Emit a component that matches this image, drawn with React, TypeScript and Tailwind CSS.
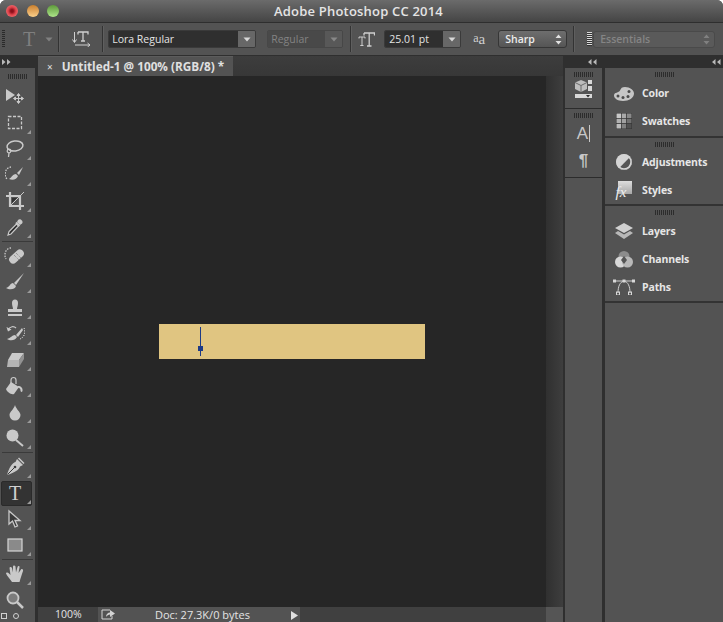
import React from "react";

const F = "[font-family:'Open_Sans','Liberation_Sans',sans-serif]";

function Caret({ c = "#d8d8d8" }: { c?: string }) {
  return (
    <svg width="8" height="5" viewBox="0 0 8 5"><path d="M0.5 0.5H7.5L4 4.5Z" fill={c} /></svg>
  );
}

function Updown({ c = "#e0e0e0" }: { c?: string }) {
  return (
    <svg width="7" height="11" viewBox="0 0 7 11"><path d="M3.5 0.5L6.5 4H0.5ZM3.5 10.5L0.5 7H6.5Z" fill={c} /></svg>
  );
}

function Sep() {
  return <div className="w-px h-[26px] bg-[#333333] border-r border-[#5f5f5f] box-content" />;
}

function Grip2() {
  return (
    <div className="flex justify-center gap-px h-[5px]">
      {Array.from({ length: 10 }).map((_, i) => (
        <div key={i} className="w-px h-[5px] bg-[#2c2c2c]" />
      ))}
    </div>
  );
}

function Corner() {
  return (
    <svg className="absolute right-[4px] bottom-[2px]" width="4" height="4" viewBox="0 0 4 4"><path d="M4 0V4H0Z" fill="#9a9a9a" /></svg>
  );
}

const tc = "#c9c9c9";

const icons: Record<string, React.ReactNode> = {
  move: (
    <svg width="20" height="18" viewBox="0 0 20 18">
      <path d="M1 1L10 7L1 13Z" fill={tc} />
      <path d="M13.500 6V15M9 10.500H18M13.500 5.500L12 7.500H15ZM13.500 15.500L12 13.500H15ZM8.500 10.500L10.500 9V12ZM18.500 10.500L16.500 9V12Z" stroke={tc} strokeWidth="1" fill={tc} />
    </svg>
  ),
  marquee: (
    <svg width="18" height="18" viewBox="0 0 18 18">
      <rect x="2.500" y="2.500" width="13" height="12" fill="none" stroke={tc} strokeWidth="1.300" strokeDasharray="3 1.500" />
    </svg>
  ),
  lasso: (
    <svg width="20" height="20" viewBox="0 0 20 20">
      <ellipse cx="10" cy="7" rx="8" ry="5" transform="rotate(-8 10 7)" fill="none" stroke={tc} strokeWidth="1.500" />
      <circle cx="4" cy="12" r="1.800" fill="none" stroke={tc} strokeWidth="1.200" />
      <path d="M4 14L3.500 18" stroke={tc} strokeWidth="1.200" />
    </svg>
  ),
  quick: (
    <svg width="20" height="20" viewBox="0 0 20 20">
      <path d="M6 2A6 7 0 0 0 2 14" fill="none" stroke={tc} strokeWidth="1.300" strokeDasharray="1.500 1.200" />
      <path d="M18 2L12 8L14 10Z" fill={tc} />
      <path d="M11 9C8 9 7 12 4 14C8 16 12 14 13 11Z" fill={tc} />
    </svg>
  ),
  crop: (
    <svg width="20" height="20" viewBox="0 0 20 20">
      <path d="M5 1V15H19M1 5H15V19" fill="none" stroke={tc} strokeWidth="2.200" />
      <path d="M5 15L15 5M15 5L19 1" stroke={tc} strokeWidth="1" />
      <path d="M7 7H12L7 12Z" fill="#333333" />
    </svg>
  ),
  dropper: (
    <svg width="20" height="20" viewBox="0 0 20 20">
      <path d="M13 3C15 0.500 19 4 17 6.500L15 8L12 5Z" fill={tc} />
      <path d="M11 5.500L14.500 9" stroke={tc} strokeWidth="2" />
      <path d="M11.500 7L4 14.500L3 18L6 17L13.500 9Z" fill="#2e2e2e" stroke={tc} strokeWidth="1.200" />
    </svg>
  ),
  heal: (
    <svg width="22" height="20" viewBox="0 0 22 20">
      <path d="M7 2A6 7 0 0 0 2 13" fill="none" stroke={tc} strokeWidth="1.300" strokeDasharray="1.500 1.200" />
      <rect x="4" y="6.500" width="17" height="8" rx="4" transform="rotate(-42 12.500 10.500)" fill={tc} />
      <path d="M10 9L15 14M12 7L17 12" stroke="#808080" strokeWidth="1" strokeDasharray="1 1" />
    </svg>
  ),
  brush: (
    <svg width="20" height="20" viewBox="0 0 20 20">
      <path d="M19 1L9 11L11 13Z" fill={tc} />
      <path d="M8 11C5 11 5 15 1 16C4 18 10 18 11 14Z" fill={tc} />
    </svg>
  ),
  stamp: (
    <svg width="20" height="20" viewBox="0 0 20 20">
      <path d="M7 5A3 3.500 0 1 1 13 5C13 8 12 9 12 11H17V14H3V11H8C8 9 7 8 7 5Z" fill={tc} />
      <rect x="3" y="16" width="14" height="2" fill={tc} />
    </svg>
  ),
  history: (
    <svg width="20" height="20" viewBox="0 0 20 20">
      <path d="M3 6C5 2 9 2 11 4" fill="none" stroke={tc} strokeWidth="1.200" />
      <path d="M1.500 3L3 7.500L6.500 5.500Z" fill={tc} />
      <path d="M17 4L11 11L13 13L18 6Z" fill={tc} />
      <path d="M10 11C7 11 6 14 2 15C5 17 10 17 12 13Z" fill={tc} />
      <path d="M19 4A8 8 0 0 1 15 15" fill="none" stroke="#ffffff" strokeWidth="1" strokeDasharray="1.200 1.200" />
    </svg>
  ),
  eraser: (
    <svg width="20" height="20" viewBox="0 0 20 20">
      <path d="M7 3H19L14 10H3Z" fill={tc} />
      <path d="M3 10H14V17H2Z" fill="#b4b4b4" />
      <path d="M14 10L19 3V9L14 17Z" fill="#929292" />
    </svg>
  ),
  bucket: (
    <svg width="20" height="20" viewBox="0 0 20 20">
      <path d="M6 8V4A2.500 2.500 0 0 1 11 4V8" fill="none" stroke={tc} strokeWidth="1.200" />
      <path d="M6 6L14 11L9 18C6 19 2 16 1 13Z" fill={tc} />
      <path d="M13 10C16 10 18 12 17.500 15C17 16.500 15.500 16 15.500 14.500C15.500 13 15 12 13 11.500Z" fill={tc} />
    </svg>
  ),
  drop: (
    <svg width="18" height="18" viewBox="0 0 18 18">
      <path d="M9 2C10 6 14.500 9 14.500 12A5.500 5.500 0 0 1 3.500 12C3.500 9 8 6 9 2Z" fill={tc} />
    </svg>
  ),
  dodge: (
    <svg width="20" height="20" viewBox="0 0 20 20">
      <circle cx="7.500" cy="7.500" r="6" fill={tc} />
      <path d="M11 12L18 18" stroke={tc} strokeWidth="2" />
    </svg>
  ),
  pen: (
    <svg width="20" height="20" viewBox="0 0 20 20">
      <path d="M12 2L18 8L15 9.500C14 13 9 16 2 18C4 11 7 6 10.500 5Z" fill={tc} />
      <path d="M13.500 1L19 6.500" stroke={tc} strokeWidth="1.500" />
      <path d="M2.500 17.500L9 11" stroke="#3a3a3a" strokeWidth="1" />
      <circle cx="10" cy="10" r="1.300" fill="#3a3a3a" />
    </svg>
  ),
  path: (
    <svg width="16" height="20" viewBox="0 0 16 20">
      <path d="M2 2V15L5.500 12L8 18L10.500 17L8 11.500H13Z" fill="#3a3a3a" stroke={tc} strokeWidth="1.300" />
    </svg>
  ),
  rect: (
    <svg width="16" height="14" viewBox="0 0 16 14">
      <rect x="1" y="1" width="14" height="12" fill="#8a8a8a" stroke="#d6d6d6" strokeWidth="1.200" />
    </svg>
  ),
  hand: (
    <svg width="20" height="20" viewBox="0 0 20 20">
      <path d="M7 18C5 15 2 12 1 9.500C1 8 3 8 4 9.500L5.500 11L4.500 4C4.500 2.500 6.500 2.500 7 4L8 8.500V2.500C8 1 10 1 10.500 2.500L11 8.500L12.500 3C13 1.500 15 2 14.500 3.500L13.500 9L16 5.500C17 4.500 18.500 5.500 18 7C17 10 16 13 14.500 18Z" fill={tc} />
    </svg>
  ),
  zoom: (
    <svg width="20" height="20" viewBox="0 0 20 20">
      <circle cx="8" cy="8" r="5.500" fill="#7c7c7c" stroke={tc} strokeWidth="1.800" />
      <path d="M12 12L18 18" stroke={tc} strokeWidth="2.500" />
    </svg>
  ),
};

function Tool({ name, corner = true }: { name: string; corner?: boolean }) {
  return (
    <div className="relative h-[26px] shrink-0 flex items-center justify-center pr-[5px]">
      {icons[name]}
      {corner && <Corner />}
    </div>
  );
}

function ToolSep() {
  return <div className="h-px shrink-0 mx-[2px] my-[1px] bg-[#3a3a3a]" />;
}

function PanelRow({ icon, label }: { icon: React.ReactNode; label: string }) {
  return (
    <div className="h-[28px] flex items-center">
      <div className="w-[37px] flex justify-center">{icon}</div>
      <span className={`text-[10.500px] tracking-[-0.15px] leading-none font-bold text-[#e6e6e6] ${F}`}>{label}</span>
    </div>
  );
}

const pc = "#c6c6c6";

export default function App() {
  return (
    <div className={`w-[723px] h-[622px] flex flex-col overflow-hidden bg-[#535353] rounded-t-[6px] ${F}`}>
      {/* title bar */}
      <div className="h-[23px] shrink-0 flex items-center pl-[6px] relative bg-gradient-to-b from-[#6b6b6b] to-[#454545] border-b border-[#2e2e2e]">
        <div className="flex gap-[8.500px]">
          <div className="w-[12px] h-[12px] rounded-full bg-[radial-gradient(circle_at_50%_50%,#8c0f1a_15%,#e0434b_45%,#f08a8a_100%)]" />
          <div className="w-[12px] h-[12px] rounded-full bg-gradient-to-b from-[#c97f2a] to-[#fbd08a]" />
          <div className="w-[12px] h-[12px] rounded-full bg-gradient-to-b from-[#5e9a3a] to-[#aee68a]" />
        </div>
        <div className="flex-1 text-center pr-[65px] text-[13px] font-semibold leading-none text-[#e4e4e4] tracking-[0.2px]">
          Adobe Photoshop CC 2014
        </div>
      </div>

      {/* options bar */}
      <div className="h-[33px] shrink-0 flex items-center bg-[#535353] border-b border-[#2f2f2f] relative">
        <div className="ml-[2px] w-[3px] h-[18px] bg-[repeating-linear-gradient(to_bottom,#2a2a2a_0,#2a2a2a_1px,transparent_1px,transparent_2px)]" />
        <span className="ml-[18px] text-[20px] leading-none text-[#7f7f7f] [font-family:'Liberation_Serif',serif]">T</span>
        <div className="ml-[10px]"><Caret c="#808080" /></div>
        <div className="ml-[5px]"><Sep /></div>
        <svg className="ml-[12px]" width="20" height="16" viewBox="0 0 20 16">
          <path d="M2.500 1V11M0.500 8.500L2.500 11.500L4.500 8.500" fill="none" stroke="#cfcfcf" />
          <path d="M6 1H16V3.500M6 3.500V1M11 1V10M9 10H13" fill="none" stroke="#cfcfcf" strokeWidth="1.300" />
          <path d="M3 14H18M15.500 12L18 14L15.500 16" fill="none" stroke="#cfcfcf" />
        </svg>
        <div className="ml-[10px]"><Sep /></div>

        <div className="ml-[4px] w-[148px] h-[18px] flex border border-[#3a3a3a] rounded-[2px] overflow-hidden">
          <div className="flex-1 bg-[#2f2f2f] pl-[3px] text-[10.500px] leading-[16px] text-[#e4e4e4]">Lora Regular</div>
          <div className="w-[17px] bg-[#676767] flex items-center justify-center"><Caret /></div>
        </div>

        <div className="ml-[11px] w-[76px] h-[18px] flex border border-[#474747] rounded-[2px] overflow-hidden">
          <div className="flex-1 bg-[#494949] pl-[3px] text-[10.500px] leading-[16px] text-[#838383]">Regular</div>
          <div className="w-[17px] bg-[#585858] flex items-center justify-center"><Caret c="#888888" /></div>
        </div>

        <div className="ml-[7px]"><Sep /></div>

        <svg className="ml-[6px]" width="17" height="15" viewBox="0 0 17 15">
          <path d="M1 5H7V6.500M1 6.500V5M4 5V13.500H2.500H5.500" fill="none" stroke="#cfcfcf" />
          <path d="M6 1H16.500V3.500M6 3.500V1M11.200 1V14M9 14H13.500" fill="none" stroke="#cfcfcf" strokeWidth="1.300" />
        </svg>

        <div className="ml-[9px] w-[77px] h-[18px] flex border border-[#3a3a3a] rounded-[2px] overflow-hidden">
          <div className="flex-1 bg-[#2f2f2f] pl-[4px] text-[10.500px] leading-[16px] text-[#e4e4e4]">25.01 pt</div>
          <div className="w-[17px] bg-[#676767] flex items-center justify-center"><Caret /></div>
        </div>

        <div className="ml-[12px] w-[16px] flex items-end text-[#cfcfcf] leading-none [font-family:'Liberation_Serif',serif]">
          <span className="text-[12px] mb-[3px]">a</span>
          <span className="text-[15px]">a</span>
        </div>

        <div className="ml-[9px] w-[69px] h-[18px] flex items-center justify-between pl-[6px] pr-[4px] rounded-[3px] border border-[#363636] bg-gradient-to-b from-[#6e6e6e] to-[#555555]">
          <span className="text-[10.500px] font-semibold leading-none text-[#ececec]">Sharp</span>
          <Updown />
        </div>

        <div className="ml-[6px]"><Sep /></div>

        <div className="ml-[12px] w-[5px] h-[14px] bg-[repeating-linear-gradient(to_bottom,#d8d8d8_0,#d8d8d8_1px,#333333_1px,#333333_2px)]" />

        <div className="ml-[1px] w-[122px] h-[17px] flex items-center justify-between pl-[6px] pr-[4px] rounded-[3px] border border-[#4a4a4a] bg-[#5a5a5a]">
          <span className="text-[10.500px] font-semibold leading-none text-[#858585]">Essentials</span>
          <Updown c="#808080" />
        </div>
      </div>

      {/* main */}
      <div className="flex-1 flex min-h-0">
        {/* left tools */}
        <div className="w-[38px] shrink-0 flex flex-col border-r-[3px] border-[#2f2f2f] overflow-hidden">
          <div className="h-[12px] shrink-0 bg-[#2f2f2f] flex items-center pl-[2px]">
            <svg width="9" height="6" viewBox="0 0 9 6"><path d="M0 0L3.500 3L0 6ZM5 0L8.500 3L5 6Z" fill="#b8b8b8" /></svg>
          </div>
          <div className="h-[16px] shrink-0 flex items-center"><div className="w-full"><Grip2 /></div></div>
          <Tool name="move" corner={false} />
          <Tool name="marquee" />
          <Tool name="lasso" />
          <Tool name="quick" />
          <Tool name="crop" />
          <Tool name="dropper" />
          <ToolSep />
          <Tool name="heal" />
          <Tool name="brush" />
          <Tool name="stamp" />
          <Tool name="history" />
          <Tool name="eraser" />
          <Tool name="bucket" />
          <Tool name="drop" />
          <Tool name="dodge" />
          <ToolSep />
          <Tool name="pen" />
          <div className="relative h-[26px] shrink-0 flex items-center justify-center pr-[5px]">
            <div className="absolute left-[1px] right-[3px] top-[1px] bottom-0 bg-[#333333] rounded-[2px] border border-[#2a2a2a]" />
            <span className="relative text-[20px] leading-none text-[#cfcfcf] [font-family:'Liberation_Serif',serif]">T</span>
            <Corner />
          </div>
          <Tool name="path" />
          <Tool name="rect" />
          <ToolSep />
          <Tool name="hand" />
          <Tool name="zoom" corner={false} />
          <div className="flex gap-[6px] pl-[1px]">
            <div className="w-[6px] h-[6px] border border-[#d0d0d0]" />
            <div className="w-[6px] h-[6px] border border-[#d0d0d0] rounded-full" />
          </div>
        </div>

        {/* document area */}
        <div className="flex-1 flex flex-col min-w-0">
          <div className="h-[20px] shrink-0 flex bg-gradient-to-b from-[#3d3d3d] to-[#373737]">
            <div className="w-[195px] flex items-center bg-[#535353] border-t border-[#5c5c5c]">
              <span className="ml-[9px] text-[10px] leading-none text-[#e0e0e0]">×</span>
              <span className="ml-[9px] text-[11.750px] leading-none font-bold text-[#e0e0e0] whitespace-nowrap">Untitled-1 @ 100% (RGB/8) *</span>
            </div>
          </div>
          <div className="flex-1 flex min-h-0">
            <div className="flex-1 bg-[#262626] flex flex-col items-center justify-center">
              <div className="mb-[1px] w-[266px] h-[35px] bg-[#e0c581] pl-[41px] pt-[3px]">
                <div className="relative w-[1px] h-[29px] bg-[#1d3a86]">
                  <div className="absolute left-[-2px] top-[19px] w-[5px] h-[5px] bg-[#1d3a86]" />
                </div>
              </div>
            </div>
            <div className="w-[17px] shrink-0 bg-gradient-to-r from-[#303030] to-[#3e3e3e]" />
          </div>
          <div className="h-[15px] shrink-0 flex text-[10.500px] leading-[15px] text-[#e4e4e4]">
            <div className="w-[60px] bg-[#404040] pl-[17px]">100%</div>
            <div className="w-[202px] bg-[#535353] relative flex">
              <svg className="ml-[3px] mt-[2px]" width="14" height="11" viewBox="0 0 14 11">
                <path d="M9 1H1V10H11V7" fill="none" stroke="#d4d4d4" />
                <path d="M5 8C5 5 7 3.500 9 3.500V1L14 4.500L9 8V5.500C7.500 5.500 6 6.500 5 8Z" fill="#d4d4d4" />
              </svg>
              <span className="ml-[40px] text-[11px]">Doc: 27.3K/0 bytes</span>
              <svg className="absolute left-[193px] top-[4px]" width="7" height="9" viewBox="0 0 7 9"><path d="M0 0L7 4.500L0 9Z" fill="#e0e0e0" /></svg>
            </div>
            <div className="flex-1 bg-[#404040]" />
            <div className="w-[17px] bg-[#555555]" />
          </div>
        </div>

        {/* right docks */}
        <div className="w-[160px] shrink-0 flex flex-col border-l-[2px] border-[#2f2f2f]">
          <div className="h-[12px] shrink-0 bg-[#2f2f2f] flex items-center">
            <div className="w-[32px] flex justify-end">
              <svg width="9" height="6" viewBox="0 0 9 6"><path d="M3.500 0L0 3L3.500 6ZM8.500 0L5 3L8.500 6Z" fill="#b8b8b8" /></svg>
            </div>
            <div className="flex-1 flex justify-end pr-[2px]">
              <svg width="9" height="6" viewBox="0 0 9 6"><path d="M3.500 0L0 3L3.500 6ZM8.500 0L5 3L8.500 6Z" fill="#b8b8b8" /></svg>
            </div>
          </div>
          <div className="flex-1 flex min-h-0">
            {/* icon dock */}
            <div className="w-[37px] shrink-0 flex flex-col border-r-[3px] border-[#2f2f2f] box-content">
              <div className="h-[41px] shrink-0 border-b border-[#2c2c2c] pt-[4px] flex flex-col items-center gap-[3px]">
                <Grip2 />
                <svg width="17" height="19" viewBox="0 0 17 19">
                  <path d="M6 0L12 2.500V9L6 12L0 9V2.500Z" fill="#bdbdbd" />
                  <path d="M6 5.500V12M0 2.500L6 5.500L12 2.500" fill="none" stroke="#6a6a6a" />
                  <rect x="13" y="0" width="4" height="4" fill="#d8d8d8" />
                  <rect x="13" y="6" width="4" height="5" fill="#d8d8d8" />
                  <rect x="0" y="14" width="17" height="4" fill="#d8d8d8" />
                  <path d="M11 15H15L13 17.500Z" fill="#2a2a2a" />
                </svg>
              </div>
              <div className="h-[69px] shrink-0 border-b border-[#2c2c2c] pt-[4px] flex flex-col items-center">
                <Grip2 />
                <div className="mt-[5px] h-[20px] flex items-center leading-none text-[17px] text-[#c8c8c8] [font-family:'Liberation_Sans',sans-serif]">
                  <span>A</span><span className="w-px h-[17px] bg-[#c8c8c8] ml-[1px]" />
                </div>
                <div className="mt-[9px] text-[17px] font-bold leading-none text-[#c8c8c8] [font-family:'Liberation_Sans',sans-serif]">¶</div>
              </div>
            </div>
            {/* panel dock */}
            <div className="flex-1 flex flex-col min-w-0">
              <div className="h-[70px] shrink-0 border-b-[2px] border-[#333333] pt-[4px]">
                <Grip2 />
                <div className="mt-[2px]">
                  <PanelRow
                    label="Color"
                    icon={
                      <svg width="20" height="15" viewBox="0 0 20 15">
                        <path d="M11 1C16 1 20 4 20 7.500C20 12 15 15 9 15C3 15 0 12 0 9.500C0 6 5 7 6 4.500C7 2 8 1 11 1Z" fill={pc} />
                        <circle cx="4" cy="10" r="1.500" fill="#4a4a4a" />
                        <circle cx="9" cy="11.500" r="1.500" fill="#4a4a4a" />
                        <circle cx="14" cy="10.500" r="1.500" fill="#4a4a4a" />
                        <circle cx="15" cy="5.500" r="1.500" fill="#4a4a4a" />
                      </svg>
                    }
                  />
                  <PanelRow
                    label="Swatches"
                    icon={
                      <svg width="16" height="16" viewBox="0 0 16 16">
                        <rect width="16" height="16" fill="#333333" />
                        <rect x="0.500" y="0.500" width="4.500" height="4.500" fill="#c8c8c8" />
                        <rect x="5.700" y="0.500" width="4.500" height="4.500" fill="#a8a8a8" />
                        <rect x="11" y="0.500" width="4.500" height="4.500" fill="#8a8a8a" />
                        <rect x="0.500" y="5.700" width="4.500" height="4.500" fill="#b0b0b0" />
                        <rect x="5.700" y="5.700" width="4.500" height="4.500" fill="#a0a0a0" />
                        <rect x="11" y="5.700" width="4.500" height="4.500" fill="#707070" />
                        <rect x="0.500" y="11" width="4.500" height="4.500" fill="#bcbcbc" />
                        <rect x="5.700" y="11" width="4.500" height="4.500" fill="#808080" />
                        <rect x="11" y="11" width="4.500" height="4.500" fill="#505050" />
                      </svg>
                    }
                  />
                </div>
              </div>
              <div className="h-[68px] shrink-0 border-b-[2px] border-[#333333] pt-[4px]">
                <Grip2 />
                <div className="mt-[1px]">
                  <PanelRow
                    label="Adjustments"
                    icon={
                      <svg width="16" height="16" viewBox="0 0 16 16">
                        <circle cx="8" cy="8" r="8" fill="#d4d4d4" />
                        <path d="M14 3A8 8 0 0 1 3 14.300Z" fill="#555555" />
                        <circle cx="8" cy="8" r="7" fill="none" stroke="#d4d4d4" strokeWidth="1.500" />
                      </svg>
                    }
                  />
                  <PanelRow
                    label="Styles"
                    icon={
                      <div className="relative w-[16px] h-[19px]">
                        <div className="absolute right-0 top-0 w-[14px] h-[13px] bg-gradient-to-b from-[#dddddd] to-[#a8a8a8]" />
                        <span className="absolute left-0 bottom-0 text-[15px] italic leading-none text-[#efefef] [font-family:'Liberation_Serif',serif]">fx</span>
                      </div>
                    }
                  />
                </div>
              </div>
              <div className="h-[97px] shrink-0 border-b-[2px] border-[#333333] pt-[4px]">
                <Grip2 />
                <div className="mt-[2px]">
                  <PanelRow
                    label="Layers"
                    icon={
                      <svg width="18" height="17" viewBox="0 0 18 17">
                        <path d="M9 0L18 5L9 10L0 5Z" fill="#d0d0d0" />
                        <path d="M3 8L9 11.500L15 8L18 10L9 16L0 10Z" fill="#b8b8b8" />
                      </svg>
                    }
                  />
                  <PanelRow
                    label="Channels"
                    icon={
                      <svg width="18" height="17" viewBox="0 0 18 17">
                        <circle cx="9" cy="5.500" r="5.500" fill="#8c8c8c" />
                        <circle cx="5.500" cy="11" r="5.500" fill="#d8d8d8" />
                        <circle cx="12.500" cy="11" r="5.500" fill="#b8b8b8" />
                        <path d="M9 5L12 9L9 13L6 9Z" fill="#555555" />
                      </svg>
                    }
                  />
                  <PanelRow
                    label="Paths"
                    icon={
                      <svg width="22" height="16" viewBox="0 0 22 16">
                        <path d="M5 14C5 7 7 3 11 2C15 3 17 7 17 14" fill="none" stroke="#d0d0d0" />
                        <path d="M2 2H20" stroke="#d0d0d0" />
                        <rect x="0" y="0.500" width="3" height="3" fill="#d8d8d8" />
                        <rect x="9.500" y="0.500" width="3" height="3" fill="#d8d8d8" />
                        <rect x="19" y="0.500" width="3" height="3" fill="#d8d8d8" />
                        <rect x="3.500" y="13" width="3" height="3" fill="none" stroke="#d8d8d8" />
                        <rect x="15.500" y="13" width="3" height="3" fill="none" stroke="#d8d8d8" />
                      </svg>
                    }
                  />
                </div>
              </div>
            </div>
          </div>
        </div>
      </div>
    </div>
  );
}
